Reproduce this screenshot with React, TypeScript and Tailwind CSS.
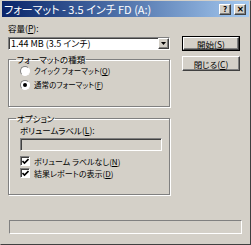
import React from "react";

const font = { fontFamily: '"Noto Sans CJK JP", "Liberation Sans", sans-serif', fontFeatureSettings: '"palt"' };

const raised = "border border-t-white border-l-white border-r-[#404040] border-b-[#404040] shadow-[inset_-1px_-1px_0_#808080]";
const sunken = "border border-t-[#808080] border-l-[#808080] border-r-white border-b-white shadow-[inset_1px_1px_0_#404040]";

const Radio = ({ checked, label }: { checked?: boolean; label: React.ReactNode }) => (
    <div className="flex items-center gap-[4px] h-[14px]">
        <span className="w-[10px] h-[10px] shrink-0 rounded-full bg-white flex items-center justify-center border border-t-[#808080] border-l-[#808080] border-r-white border-b-white">
            {checked && <span className="w-[4px] h-[4px] rounded-full bg-black" />}
        </span>
        <span className="text-[7.5px]">{label}</span>
    </div>
);

const Check = ({ label }: { label: React.ReactNode }) => (
    <div className="flex items-center gap-[4px] h-[12px]">
        <span className={"w-[10px] h-[10px] shrink-0 bg-white flex items-center justify-center " + sunken}>
            <svg width="7" height="7" viewBox="0 0 7 7">
                <path d="M0.5 3 L2.5 5 L6.5 1" stroke="black" strokeWidth="1.6" fill="none" />
            </svg>
        </span>
        <span className="text-[8px] leading-[11px]">{label}</span>
    </div>
);

const U = ({ children }: { children: React.ReactNode }) => <span className="underline">{children}</span>;

const Group = ({ title, className, children }: { title: string; className: string; children: React.ReactNode }) => (
    <fieldset className={"border border-[#808080] shadow-[inset_1px_1px_0_white,1px_1px_0_white] px-[11px] " + className}>
        <legend className="px-[1px] ml-[-4px] leading-[10px]">{title}</legend>
        {children}
    </fieldset>
);

const App = () => {
    return (
        <div className="w-[251px] h-[245px] bg-[#d4d0c8] text-black text-[8.5px] leading-[12px] flex flex-col border border-r-[#404040] border-b-[#404040] border-t-[#d4d0c8] border-l-[#d4d0c8] overflow-hidden" style={font}>
            <div className="h-[16px] mx-[1px] flex items-center justify-between bg-gradient-to-r from-[#0a246a] to-[#a6caf0] pl-[2px] pr-[3px]">
                <span className="text-white text-[11px] leading-[14px]">フォーマット - 3.5 インチ FD (A:)</span>
                <div className="flex gap-[3px]">
                    <span className={"w-[12px] h-[11px] bg-[#d4d0c8] flex items-center justify-center text-[8px] font-bold leading-none " + raised}>?</span>
                    <span className={"w-[12px] h-[11px] bg-[#d4d0c8] flex items-center justify-center text-[8px] font-bold leading-none " + raised}>✕</span>
                </div>
            </div>
            <div className="flex pl-[7px] pt-[5px] gap-[12px]">
                <div className="w-[162px] flex flex-col">
                    <div className="h-[12px]">容量(<U>P</U>):</div>
                    <div className={"mt-[3px] h-[13px] bg-white flex items-center justify-between " + sunken}>
                        <span className="pl-[2px] text-[9px] leading-[11px]">1.44 MB (3.5 インチ)</span>
                        <span className={"w-[11px] h-[11px] bg-[#d4d0c8] flex items-center justify-center " + raised}>
                            <svg width="5" height="3" viewBox="0 0 5 3"><path d="M0 0 H5 L2.5 3 Z" fill="black" /></svg>
                        </span>
                    </div>
                    <Group title="フォーマットの種類" className="mt-[4px] h-[53px] pt-[0px]">
                        <Radio label={<>クイック フォーマット(<U>Q</U>)</>} />
                        <Radio checked label={<>通常のフォーマット(<U>F</U>)</>} />
                    </Group>
                    <Group title="オプション" className="mt-[6px] h-[82px] pt-[0px]">
                        <div className="mt-[1px]">ボリュームラベル(<U>L</U>):</div>
                        <div className={"mt-[2px] h-[13px] bg-[#d4d0c8] mr-[-4px] " + sunken} />
                        <div className="mt-[4px] flex flex-col">
                            <Check label={<>ボリューム ラベルなし(<U>N</U>)</>} />
                            <Check label={<>結果レポートの表示(<U>D</U>)</>} />
                        </div>
                    </Group>
                </div>
                <div className="flex flex-col gap-[5px] pt-[14px]">
                    <div className="w-[58px] h-[15px] border border-black">
                        <div className={"h-full flex items-center justify-center " + raised}>開始(<U>S</U>)</div>
                    </div>
                    <div className={"w-[58px] h-[15px] flex items-center justify-center " + raised}>閉じる(<U>C</U>)</div>
                </div>
            </div>
            <div className="mx-[8px] mt-[25px] h-[14px] border border-t-[#808080] border-l-[#808080] border-r-white border-b-white" />
        </div>
    );
};

export default App;
